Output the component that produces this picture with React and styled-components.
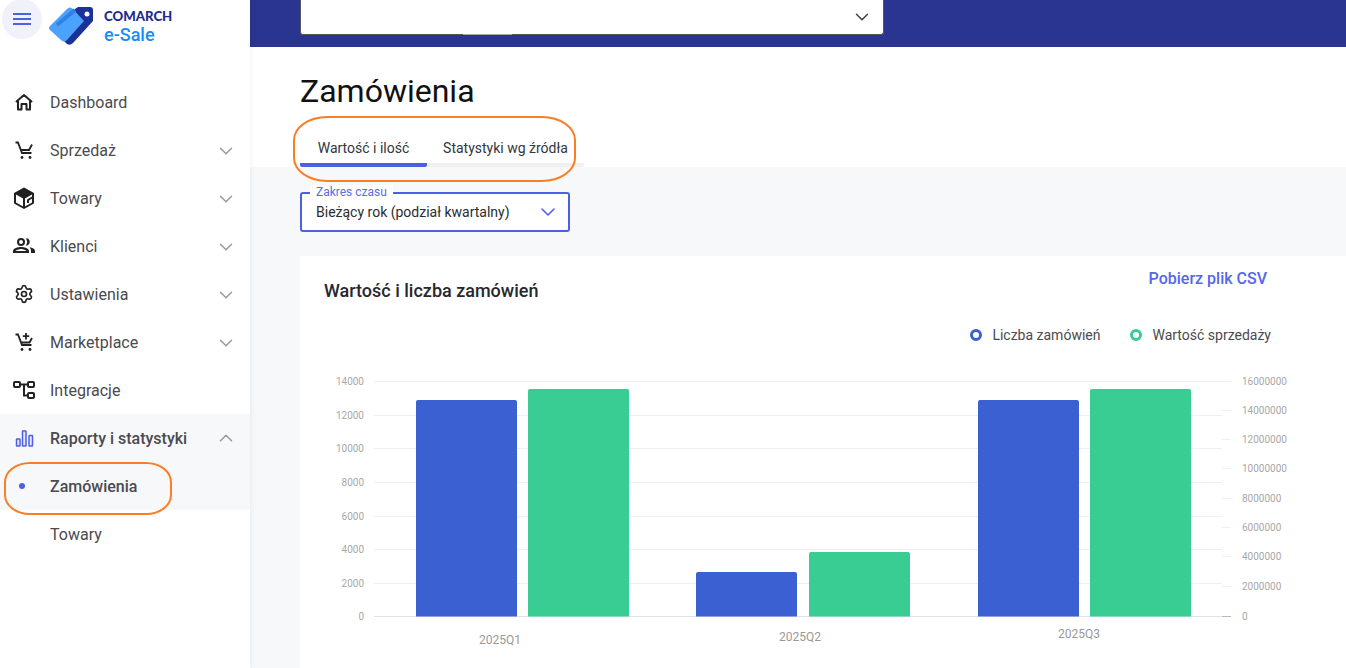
import React from 'react';
import styled, { createGlobalStyle } from 'styled-components';
import { ChevronDown, ChevronUp, Settings } from 'lucide-react';

const GlobalStyle = createGlobalStyle`
  html, body {
    margin: 0;
    padding: 0;
    height: 100%;
    overflow: hidden;
    background: #fff;
    font-family: Roboto, "Liberation Sans", sans-serif;
  }
  *, *::before, *::after {
    box-sizing: border-box;
  }
`;

const HomeIcon = () => (
  <svg width="24" height="24" viewBox="0 0 24 24" fill="none" stroke="#222" strokeWidth="2" strokeLinejoin="round">
    <path d="M6 19.500v-8H4.500L12 5l7.500 6.500H18v8h-3.500v-5.500h-5v5.500z" />
  </svg>
);

const CartIcon = () => (
  <svg width="24" height="24" viewBox="0 0 24 24" fill="none" stroke="#222" strokeWidth="1.800">
    <path d="M3.500 4.500h2.500l4 10.500h9.500M20 6.500l-3 5.500H8.500" />
    <circle cx="10" cy="19.500" r="1.400" fill="#222" stroke="none" />
    <circle cx="18" cy="19.500" r="1.400" fill="#222" stroke="none" />
  </svg>
);

const BoxIcon = () => (
  <svg width="24" height="24" viewBox="0 0 24 24" fill="none" stroke="#222" strokeWidth="2" strokeLinejoin="round">
    <path d="M12 2.500l9 5v9.500l-9 5-9-5V7.500z" />
    <path d="M12 3l8 4.500-8 4.500-8-4.500z" fill="#222" />
    <path d="M12 12v9.500M21 11l-5 3v3" />
  </svg>
);

const PeopleIcon = () => (
  <svg width="24" height="24" viewBox="0 0 24 24" fill="#222">
    <path d="M9 4a4 4 0 1 1 0 8 4 4 0 0 1 0-8zm0 2a2 2 0 1 0 0 4 2 2 0 0 0 0-4z" />
    <path d="M1 19v-2c0-2.600 5-4 8-4s8 1.400 8 4v2zm2.500-2h11c-.6-1-3.500-2-5.500-2s-4.900 1-5.500 2z" />
    <path d="M15 4.200a4 4 0 0 1 0 7.600c-.7 0-1-.4-.6-1a5.500 5.500 0 0 0 0-5.600c-.4-.6-.1-1 .6-1z" />
    <path d="M17.500 13.300c3 .5 5.500 1.700 5.500 3.700v2h-4v-2c0-1.500-.6-2.700-1.500-3.700z" />
  </svg>
);

const MarketIcon = () => (
  <svg width="24" height="24" viewBox="0 0 24 24" fill="none" stroke="#222" strokeWidth="1.800">
    <path d="M3.500 4.500h2.500l4 10.500h9.500M20 8l-2.500 4.500H8.500" />
    <path d="M14 3v6.500M10.800 6.200h6.400" />
    <circle cx="10" cy="19.500" r="1.400" fill="#222" stroke="none" />
    <circle cx="18" cy="19.500" r="1.400" fill="#222" stroke="none" />
  </svg>
);

const FlowIcon = () => (
  <svg width="24" height="24" viewBox="0 0 24 24" fill="none" stroke="#222" strokeWidth="2">
    <rect x="2" y="4" width="6" height="5" rx="1" />
    <rect x="16" y="4" width="6" height="5" rx="1" />
    <rect x="16" y="15" width="6" height="5" rx="1" />
    <path d="M8 6.500h8M12 6.500v11h4" />
  </svg>
);

const BarsIcon = () => (
  <svg width="24" height="24" viewBox="0 0 24 24" fill="#e4e7fb" stroke="#4d60e4" strokeWidth="1.500">
    <rect x="4.500" y="13" width="3.500" height="7" rx=".5" />
    <rect x="10.500" y="5" width="3.500" height="15" rx=".5" />
    <rect x="17" y="9.500" width="3.500" height="10.500" rx=".5" />
  </svg>
);

const navItems = [
  { label: 'Dashboard', icon: <HomeIcon /> },
  { label: 'Sprzedaż', icon: <CartIcon />, chevron: true },
  { label: 'Towary', icon: <BoxIcon />, chevron: true },
  { label: 'Klienci', icon: <PeopleIcon />, chevron: true },
  { label: 'Ustawienia', icon: <Settings size={20} color="#222" strokeWidth={2} />, chevron: true },
  { label: 'Marketplace', icon: <MarketIcon />, chevron: true },
  { label: 'Integracje', icon: <FlowIcon /> },
];

const leftTicks = [
  ['14000', 381], ['12000', 415], ['10000', 448], ['8000', 482],
  ['6000', 516], ['4000', 549], ['2000', 583], ['0', 616],
];

const rightTicks = [
  ['16000000', 381], ['14000000', 410], ['12000000', 439], ['10000000', 468],
  ['8000000', 498], ['6000000', 527], ['4000000', 556], ['2000000', 586], ['0', 616],
];

const bars = [
  { x: 416, top: 400, color: '#3b60d1' },
  { x: 528, top: 389, color: '#39cc93' },
  { x: 696, top: 572, color: '#3b60d1' },
  { x: 809, top: 552, color: '#39cc93' },
  { x: 978, top: 400, color: '#3b60d1' },
  { x: 1090, top: 389, color: '#39cc93' },
];

const quarters = [
  ['2025Q1', 500, 644],
  ['2025Q2', 800, 641],
  ['2025Q3', 1079, 638],
];

export default function App() {
  return (
    <Page>
      <GlobalStyle />
      <Sidebar>
        <TopRow>
          <MenuButton>
            <svg width="20" height="14" viewBox="0 0 20 14" stroke="#4d60e4" strokeWidth="2">
              <path d="M1 2h18M1 7h18M1 12h18" />
            </svg>
          </MenuButton>
          <LogoMark width="46" height="40" viewBox="0 0 46 40">
            <path d="M26 3l3-2h12q3 0 3 3v11L24 37q-3 3-6 1L10 30z" fill="#1c3199" />
            <path d="M1 20L18 3q3-3 6 0l11 12-17 19q-3 3-6 0L1 24q-2-2 0-4z" fill="#4aa2fb" />
            <path d="M8 19L26 4" stroke="#2f80ea" strokeWidth="4" fill="none" />
            <circle cx="38" cy="8" r="2.500" fill="#fff" />
          </LogoMark>
          <LogoText>
            <LogoTop>COMARCH</LogoTop>
            <LogoBottom>e-Sale</LogoBottom>
          </LogoText>
        </TopRow>
        <Nav>
          {navItems.map((item) => (
            <NavRow key={item.label}>
              <IconSlot>{item.icon}</IconSlot>
              <NavLabel>{item.label}</NavLabel>
              {item.chevron && <NavChevron as={ChevronDown} size={22} color="#999" strokeWidth={1.600} />}
            </NavRow>
          ))}
          <NavRow $active>
            <IconSlot><BarsIcon /></IconSlot>
            <NavLabel $bold>Raporty i statystyki</NavLabel>
            <ChevronUp size={22} color="#999" strokeWidth={1.600} />
          </NavRow>
          <NavRow $active>
            <IconSlot><Dot /></IconSlot>
            <NavLabel $bold>Zamówienia</NavLabel>
            <SideCircle />
          </NavRow>
          <NavRow>
            <IconSlot />
            <NavLabel>Towary</NavLabel>
          </NavRow>
        </Nav>
      </Sidebar>

      <Main>
        <Header>
          <HeaderSelect>
            <ChevronDown size={22} color="#444" strokeWidth={1.700} />
          </HeaderSelect>
        </Header>

        <TitleBlock>
          <Title>Zamówienia</Title>
          <Tabs>
            <Tab $active>Wartość i ilość</Tab>
            <Tab $wide>Statystyki wg źródła</Tab>
            <TabCircle />
          </Tabs>
        </TitleBlock>

        <Content>
          <RangeSelect>
            <RangeLegend>Zakres czasu</RangeLegend>
            <span>Bieżący rok (podział kwartalny)</span>
            <ChevronDown size={24} color="#4d60e4" strokeWidth={1.600} />
          </RangeSelect>

          <Card>
            <CardHead>
              <CardTitle>Wartość i liczba zamówień</CardTitle>
              <CsvLink>Pobierz plik CSV</CsvLink>
            </CardHead>
            <Legend>
              <LegendItem $color="#3b60d1">Liczba zamówień</LegendItem>
              <LegendItem $color="#39cc93">Wartość sprzedaży</LegendItem>
            </Legend>
            <ChartSvg width="1046" height="298" viewBox="300 370 1046 298">
              {leftTicks.map(([label, y]) => (
                <g key={label}>
                  <line x1="374" x2="1222" y1={y + 0.5} y2={y + 0.5} stroke={y === 616 ? '#e2e2ea' : '#eeeefa'} />
                  <text x="364" y={y + 4} textAnchor="end" fontSize="10" fill="#a8a8a8">{label}</text>
                </g>
              ))}
              {rightTicks.map(([label, y]) => (
                <g key={label}>
                  <line x1="1222" x2="1231" y1={y + 0.5} y2={y + 0.5} stroke={y === 616 ? '#bbb' : '#efeff5'} />
                  <text x="1242" y={y + 4} fontSize="10" fill="#a8a8a8">{label}</text>
                </g>
              ))}
              {bars.map((bar) => (
                <path
                  key={bar.x}
                  d={`M${bar.x} 616.500V${bar.top + 2}q0-2 2-2h97q2 0 2 2V616.500z`}
                  fill={bar.color}
                />
              ))}
              {quarters.map(([label, x, y]) => (
                <text key={label} x={x} y={y} textAnchor="middle" fontSize="12" fill="#999">{label}</text>
              ))}
            </ChartSvg>
          </Card>
        </Content>
      </Main>
    </Page>
  );
}

const Page = styled.div`
  display: flex;
  width: 1346px;
  height: 668px;
  overflow: hidden;
`;

const Sidebar = styled.aside`
  position: relative;
  z-index: 2;
  flex: 0 0 250px;
  background: #fff;
  box-shadow: 1px 0 6px rgba(0, 0, 0, 0.06);
`;

const TopRow = styled.div`
  display: flex;
  align-items: flex-start;
  height: 40px;
  margin-top: -1px;
  padding-left: 2px;
`;

const MenuButton = styled.button`
  display: flex;
  flex: 0 0 40px;
  align-items: center;
  justify-content: center;
  height: 40px;
  padding: 0;
  border: 0;
  border-radius: 50%;
  background: #f1f1fb;
`;

const LogoMark = styled.svg`
  flex: none;
  margin: 7px 0 0 7px;
`;

const LogoText = styled.div`
  display: flex;
  flex-direction: column;
  margin: 10px 0 0 9px;
`;

const LogoTop = styled.span`
  color: #1c2c8c;
  font-family: Lato, sans-serif;
  font-size: 13.200px;
  font-weight: 900;
  line-height: 14px;
`;

const LogoBottom = styled.span`
  margin-top: 2px;
  color: #1a8cfa;
  font-size: 18px;
  font-weight: 500;
  line-height: 20px;
`;

const Nav = styled.nav`
  margin-top: 39px;
`;

const NavRow = styled.div`
  position: relative;
  display: flex;
  align-items: center;
  height: 48px;
  padding: 0 13px 0 12px;
  background: ${(p) => (p.$active ? '#f7f8fa' : 'transparent')};
`;

const NavChevron = styled.svg`
  margin-top: 2px;
`;

const IconSlot = styled.span`
  display: flex;
  flex: 0 0 24px;
  align-items: center;
  justify-content: center;
  height: 24px;
  margin-right: 14px;
`;

const NavLabel = styled.span`
  flex: 1;
  color: #4a4a4f;
  font-size: 16px;
  font-weight: ${(p) => (p.$bold ? 500 : 400)};
`;

const Dot = styled.i`
  width: 6px;
  height: 6px;
  margin-right: 4px;
  border-radius: 50%;
  background: #4d60e4;
`;

const SideCircle = styled.span`
  position: absolute;
  top: 0;
  left: 4px;
  width: 168px;
  height: 53px;
  border: 2.500px solid #fb7d24;
  border-radius: 26px / 20px;
`;

const Main = styled.main`
  display: flex;
  flex: 1;
  flex-direction: column;
  min-width: 0;
`;

const Header = styled.header`
  flex: 0 0 47px;
  padding: 0 50px;
  background: #2a3591;
`;

const HeaderSelect = styled.div`
  position: relative;
  display: flex;
  align-items: center;
  justify-content: flex-end;
  width: 584px;
  height: 35px;
  padding-right: 10px;
  border: 1px solid #555;
  border-top: 0;
  border-radius: 0 0 3px 3px;
  background: #fff;

  &::after {
    content: '';
    position: absolute;
    bottom: -1px;
    left: 162px;
    width: 49px;
    height: 1px;
    background: #aaa;
  }
`;

const TitleBlock = styled.section`
  flex: 0 0 120px;
  padding: 24px 0 0 50px;
  background: #fff;
`;

const Title = styled.h1`
  margin: 0;
  color: #111;
  font-size: 32px;
  font-weight: 400;
  line-height: 40px;
`;

const Tabs = styled.div`
  position: relative;
  display: flex;
  width: 284px;
  height: 39px;
  margin-top: 17px;
  border-bottom: 4px solid #f0f0f0;
  border-radius: 0 0 2px 2px;
`;

const Tab = styled.div`
  display: flex;
  flex: 0 0 ${(p) => (p.$wide ? '157px' : '127px')};
  align-items: center;
  justify-content: center;
  height: 39px;
  padding-top: 4px;
  border-bottom: 4px solid ${(p) => (p.$active ? '#4d60e4' : 'transparent')};
  border-radius: 0 0 2px 2px;
  color: #33363d;
  font-size: 14px;
`;

const TabCircle = styled.span`
  position: absolute;
  top: -12px;
  left: -7px;
  width: 283px;
  height: 66px;
  border: 2.500px solid #fb7d24;
  border-radius: 34px / 24px;
`;

const Content = styled.section`
  flex: 1;
  padding: 25px 0 0 50px;
  background: #f7f8fa;
`;

const RangeSelect = styled.div`
  position: relative;
  display: flex;
  align-items: center;
  justify-content: space-between;
  width: 270px;
  height: 40px;
  padding: 0 8px 0 14px;
  border: 2px solid #4d60e4;
  border-radius: 3px;
  background: #fff;
  color: #2a2d33;
  font-size: 14px;
`;

const RangeLegend = styled.span`
  position: absolute;
  top: -9px;
  left: 8px;
  padding: 0 6px;
  background: #fff;
  color: #5a6ce6;
  font-size: 12px;
  line-height: 14px;
`;

const Card = styled.div`
  height: 412px;
  margin-top: 24px;
  overflow: hidden;
  background: #fff;
`;

const CardHead = styled.div`
  display: flex;
  align-items: flex-start;
  justify-content: space-between;
  padding: 13px 79px 0 24px;
`;

const CardTitle = styled.h2`
  margin: 10px 0 0;
  color: #26282c;
  font-size: 18px;
  font-weight: 500;
  line-height: 24px;
`;

const CsvLink = styled.a`
  color: #5468e7;
  font-size: 16px;
  font-weight: 500;
  line-height: 20px;
`;

const Legend = styled.div`
  display: flex;
  justify-content: flex-end;
  gap: 30px;
  padding: 22px 75px 0 0;
`;

const LegendItem = styled.span`
  display: flex;
  align-items: center;
  color: #4a4a4f;
  font-size: 14px;
  line-height: 20px;

  &::before {
    content: '';
    width: 12px;
    height: 12px;
    margin-right: 10px;
    border: 3px solid ${(p) => p.$color};
    border-radius: 50%;
  }
`;

const ChartSvg = styled.svg`
  display: block;
  margin-top: 25px;
  font-family: Roboto, sans-serif;
`;
